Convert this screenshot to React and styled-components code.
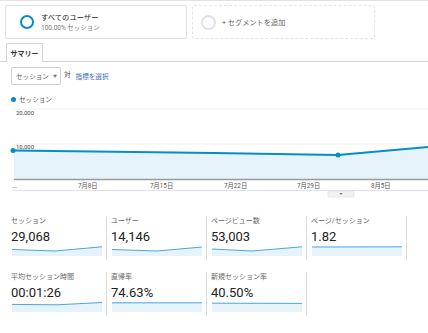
import React from 'react';
import styled, { createGlobalStyle } from 'styled-components';

const GlobalStyle = createGlobalStyle`
  html, body {
    margin: 0;
    padding: 0;
    background: #fff;
  }
  body {
    font-family: Roboto, 'Noto Sans CJK JP', sans-serif;
    color: #333;
  }
`;

const Page = styled.div`
  width: 428px;
  height: 333px;
  overflow: hidden;
  border-top: 1px solid #e3e3e3;
  box-sizing: border-box;
`;

const SegmentBar = styled.div`
  display: flex;
  gap: 5px;
  padding: 4px 0 0 5px;
`;

const SegmentCard = styled.div`
  display: flex;
  align-items: center;
  box-sizing: border-box;
  width: ${p => p.$width}px;
  height: 34px;
  padding-left: ${p => p.$pad}px;
  border: 1px ${p => (p.$dashed ? 'dashed #e4e4e4' : 'solid #e0e0e0')};
  border-radius: 2px;
  gap: ${p => p.$gap}px;
`;

const Ring = styled.div`
  box-sizing: border-box;
  width: ${p => p.$size}px;
  height: ${p => p.$size}px;
  border-radius: 50%;
  border: ${p => (p.$muted ? '2px solid #e2e2e2' : '2.5px solid #058dc7')};
`;

const SegmentText = styled.div`
  display: flex;
  flex-direction: column;
  gap: 2px;
`;

const SegmentName = styled.div`
  font-size: 7.3px;
  line-height: 9px;
  color: #222;
`;

const SegmentSub = styled.div`
  font-size: 6.5px;
  line-height: 8px;
  color: #777;
`;

const AddText = styled.div`
  font-size: 7.2px;
  color: #666;
`;

const TabBar = styled.div`
  display: flex;
  margin-top: 4px;
  padding-left: 6px;
  border-bottom: 1px solid #d6d6d6;
`;

const Tab = styled.div`
  box-sizing: border-box;
  width: 37px;
  height: 19px;
  margin-bottom: -1px;
  display: flex;
  align-items: center;
  justify-content: center;
  border: 1px solid #d6d6d6;
  border-bottom: none;
  background: #fff;
  font-size: 7px;
  font-weight: 700;
  color: #333;
`;

const Controls = styled.div`
  display: flex;
  align-items: center;
  margin-top: 5px;
  padding-left: 11px;
`;

const Select = styled.div`
  box-sizing: border-box;
  width: 50px;
  height: 18px;
  display: flex;
  align-items: center;
  padding-left: 4px;
  gap: 4px;
  border: 1px solid #d0d0d0;
  border-radius: 2px;
  font-size: 6.6px;
  color: #666;
`;

const Caret = styled.span`
  font-size: 4px;
  color: #777;
`;

const Versus = styled.span`
  margin-left: 3px;
  margin-top: -4px;
  font-size: 6.6px;
  color: #444;
`;

const LinkText = styled.span`
  margin-left: 5px;
  font-size: 6.6px;
  color: #3b6cb5;
`;

const Legend = styled.div`
  display: flex;
  align-items: center;
  gap: 3px;
  margin-top: 9px;
  padding-left: 11px;
  height: 10px;
  font-size: 6.6px;
  color: #555;
`;

const LegendDot = styled.span`
  width: 5px;
  height: 5px;
  border-radius: 50%;
  background: #058dc7;
`;

const ChartSvg = styled.svg`
  display: block;
  width: 428px;
  height: 95px;
  font-family: Roboto, 'Noto Sans CJK JP', sans-serif;
`;

const MetricGrid = styled.div`
  display: grid;
  grid-template-columns: repeat(4, 100px);
  row-gap: 12px;
  margin-top: 17px;
  padding-left: 7px;
`;

const MetricCard = styled.div`
  box-sizing: border-box;
  height: 44px;
  padding: 1px 0 0 4px;
  border-right: 1px solid #dcdcdc;
`;

const MetricLabel = styled.div`
  font-size: 7px;
  line-height: 9px;
  color: #666;
`;

const MetricValue = styled.div`
  margin-top: 3px;
  font-size: 13px;
  line-height: 15px;
  color: #222;
`;

const Spark = styled.svg`
  display: block;
  width: 90px;
  height: 10px;
  margin: 2px 0 0 1px;
`;

const xLabels = [
  ['...', 12],
  ['7月8日', 78],
  ['7月15日', 150],
  ['7月22日', 224],
  ['7月29日', 297],
  ['8月5日', 371],
];

const linePts = [
  [14, 151.5],
  [214, 154],
  [338, 156],
  [428, 148],
];

function SessionChart() {
  const line = linePts.map(p => p.join(',')).join(' ');
  const area = `14,180 ${line} 428,180`;
  return (
    <ChartSvg viewBox="0 105 428 95">
      <line x1="14" y1="110" x2="428" y2="110" stroke="#efefef" />
      <line x1="14" y1="145" x2="428" y2="145" stroke="#efefef" />
      <polygon points={area} fill="#e6f3fa" />
      <polyline points={line} fill="none" stroke="#058dc7" strokeWidth="2" />
      <circle cx="13" cy="151.5" r="2.5" fill="#058dc7" />
      <circle cx="338" cy="156" r="2.5" fill="#058dc7" />
      <text x="16" y="116" fontSize="6" fill="#444">20,000</text>
      <text x="16" y="150" fontSize="6" fill="#444">10,000</text>
      <line x1="14" y1="180.5" x2="428" y2="180.5" stroke="#9a9a9a" strokeWidth="1.5" />
      {xLabels.map(([t, x]) => (
        <text key={t} x={x} y="189" fontSize="6.3" fill="#555">{t}</text>
      ))}
      <line x1="12" y1="191.5" x2="428" y2="191.5" stroke="#e2e2e2" />
      <rect x="328" y="192" width="26" height="6" fill="#f2f2f2" stroke="#dadada" strokeWidth="0.6" />
      <path d="M339.5 194 L342.5 194 L341 196 Z" fill="#777" />
    </ChartSvg>
  );
}

function Sparkline({ pts }) {
  const line = pts.map(p => p.join(',')).join(' ');
  return (
    <Spark viewBox="0 0 90 10" preserveAspectRatio="none">
      <polygon points={`0,10 ${line} 90,10`} fill="#e6f3fa" />
      <polyline points={line} fill="none" stroke="#4ba6dc" strokeWidth="1" />
    </Spark>
  );
}

const metrics = [
  { label: 'セッション', value: '29,068', pts: [[0, 3.5], [43, 5], [90, 0.8]] },
  { label: 'ユーザー', value: '14,146', pts: [[0, 3.5], [45, 5], [90, 1]] },
  { label: 'ページビュー数', value: '53,003', pts: [[0, 3], [40, 5], [90, 0.8]] },
  { label: 'ページ/セッション', value: '1.82', pts: [[0, 1], [90, 0.8]] },
  { label: '平均セッション時間', value: '00:01:26', pts: [[0, 2.4], [45, 2.8], [90, 0.5]] },
  { label: '直帰率', value: '74.63%', pts: [[0, 0.8], [90, 0.8]] },
  { label: '新規セッション率', value: '40.50%', pts: [[0, 1.2], [90, 1.4]] },
];

export default function App() {
  return (
    <Page>
      <GlobalStyle />
      <SegmentBar>
        <SegmentCard $width={182} $pad={14} $gap={7}>
          <Ring $size={14} />
          <SegmentText>
            <SegmentName>すべてのユーザー</SegmentName>
            <SegmentSub>100.00% セッション</SegmentSub>
          </SegmentText>
        </SegmentCard>
        <SegmentCard $width={183} $pad={8} $gap={6} $dashed>
          <Ring $size={15} $muted />
          <AddText>+ セグメントを追加</AddText>
        </SegmentCard>
      </SegmentBar>

      <TabBar>
        <Tab>サマリー</Tab>
      </TabBar>

      <Controls>
        <Select>
          セッション <Caret>▼</Caret>
        </Select>
        <Versus>対</Versus>
        <LinkText>指標を選択</LinkText>
      </Controls>

      <Legend>
        <LegendDot />
        セッション
      </Legend>

      <SessionChart />

      <MetricGrid>
        {metrics.map(m => (
          <MetricCard key={m.label}>
            <MetricLabel>{m.label}</MetricLabel>
            <MetricValue>{m.value}</MetricValue>
            <Sparkline pts={m.pts} />
          </MetricCard>
        ))}
      </MetricGrid>
    </Page>
  );
}
